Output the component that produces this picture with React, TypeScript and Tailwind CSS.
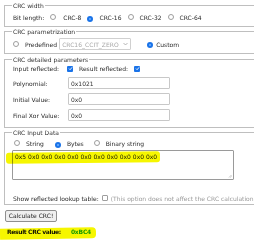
import React from "react";

const Radio = ({ checked = false }: { checked?: boolean }) =>
  checked ? (
    <span className="inline-flex items-center justify-center w-[6px] h-[6px] rounded-full bg-[#1a73e8] shrink-0">
      <span className="w-[2px] h-[2px] rounded-full bg-[#6fb0ff]" />
    </span>
  ) : (
    <span className="inline-block w-[6px] h-[6px] rounded-full border border-[#9e9e9e] bg-white shrink-0" />
  );

const Check = ({ checked = false }: { checked?: boolean }) =>
  checked ? (
    <span className="inline-flex items-center justify-center w-[6px] h-[6px] rounded-[1px] bg-[#1a73e8] shrink-0">
      <svg width="5" height="5" viewBox="0 0 10 10">
        <path d="M2 5.2 L4.2 7.4 L8.2 2.6" stroke="white" strokeWidth="1.8" fill="none" />
      </svg>
    </span>
  ) : (
    <span className="inline-block w-[6px] h-[6px] rounded-[1px] border border-[#9e9e9e] bg-white shrink-0" />
  );

const Field = ({ value }: { value: string }) => (
  <div className="w-[102px] h-[12px] border border-[#c8c8c8] rounded-[1px] flex items-center pl-[2px] text-[#333]">
    {value}
  </div>
);

export default function App() {
  const fs = "border border-[#bfbfbf] pl-[7px] w-[290px] m-0";
  const lg = "px-[1px] text-[#333]";
  return (
    <div className="relative w-[254px] h-[240px] overflow-hidden bg-white text-[6px] leading-[7px] text-[#2a2a2a] font-['DejaVu_Sans',sans-serif]">
      <div className="pl-[4px] pt-[1.5px]">
        <fieldset className={`${fs} pb-[2px]`}>
          <legend className={lg}>CRC width</legend>
          <div className="mt-[3px] h-[12px] flex items-center">
            <span className="pl-[1px]">Bit length:</span>
            <span className="ml-[6px]"><Radio /></span>
            <span className="ml-[7px]">CRC-8</span>
            <span className="ml-[6px]"><Radio checked /></span>
            <span className="ml-[6px]">CRC-16</span>
            <span className="ml-[6px]"><Radio /></span>
            <span className="ml-[6px]">CRC-32</span>
            <span className="ml-[6px]"><Radio /></span>
            <span className="ml-[6px]">CRC-64</span>
          </div>
        </fieldset>

        <fieldset className={`${fs} mt-[1.5px] pb-[3px]`}>
          <legend className={lg}>CRC parametrization</legend>
          <div className="mt-[3px] h-[12px] flex items-center">
            <span className="ml-[1px]"><Radio /></span>
            <span className="ml-[6px]">Predefined</span>
            <div className="ml-[2px] w-[72px] h-[12px] border border-[#d0d0d0] rounded-[1px] flex items-center justify-between pl-[2px] pr-[2px] text-[#a8a8a8]">
              <span>CRC16_CCIT_ZERO</span>
              <svg width="5" height="4" viewBox="0 0 10 8">
                <path d="M1 2 L5 6 L9 2" stroke="#9a9a9a" strokeWidth="1.4" fill="none" />
              </svg>
            </div>
            <span className="ml-[16px]"><Radio checked /></span>
            <span className="ml-[3px]">Custom</span>
          </div>
        </fieldset>

        <fieldset className={`${fs} mt-[1.5px] pb-[6px]`}>
          <legend className={lg}>CRC detailed parameters</legend>
          <div className="h-[12px] flex items-center">
            <span className="w-[55px] pl-[1px]">Input reflected:</span>
            <Check checked />
            <span className="ml-[6px] w-[55px]">Result reflected:</span>
            <Check checked />
          </div>
          <div className="mt-[2.5px] h-[12px] flex items-center">
            <span className="w-[56px] pl-[1px]">Polynomial:</span>
            <Field value="0x1021" />
          </div>
          <div className="mt-[4px] h-[12px] flex items-center">
            <span className="w-[56px] pl-[1px]">Initial Value:</span>
            <Field value="0x0" />
          </div>
          <div className="mt-[4px] h-[12px] flex items-center">
            <span className="w-[56px] pl-[1px]">Final Xor Value:</span>
            <Field value="0x0" />
          </div>
        </fieldset>

        <fieldset className={`${fs} mt-[0.5px] pb-0`}>
          <legend className={lg}>CRC Input Data</legend>
          <div className="mt-[3px] h-[10px] flex items-center">
            <span className="ml-[2px]"><Radio /></span>
            <span className="ml-[6px]">String</span>
            <span className="ml-[11px]"><Radio checked /></span>
            <span className="ml-[6px]">Bytes</span>
            <span className="ml-[10px]"><Radio /></span>
            <span className="ml-[6px]">Binary string</span>
          </div>
          <div className="relative mt-[1px] w-[222px] h-[30px] border border-[#9a9a9a] rounded-[1px] pl-[2px] pt-[2px] text-[#222]">
            0x5 0x0 0x0 0x0 0x0 0x0 0x0 0x0 0x0 0x0 0x0
            <svg className="absolute right-[1px] bottom-[1px]" width="4" height="4" viewBox="0 0 8 8">
              <path d="M7 2 L2 7 M7 5 L5 7" stroke="#888" strokeWidth="1" />
            </svg>
          </div>
          <div className="mt-[14px] h-[10px] flex items-center">
            <span className="pl-[1px]">Show reflected lookup table:</span>
            <span className="ml-[3px]"><Check /></span>
            <span className="ml-[3px] text-[#9a9a9a] whitespace-nowrap">(This option does not affect the CRC calculation</span>
          </div>
        </fieldset>

        <div className="mt-[5px] ml-[1px] w-[52px] h-[12px] border border-[#8f8f8f] rounded-[2px] bg-[#efefef] flex items-center justify-center text-[#222]">
          Calculate CRC!
        </div>

        <div className="mt-[5px] h-[10px] flex items-center pl-[3px]">
          <span className="font-bold text-[#111] tracking-[-0.35px]">Result CRC value:</span>
          <span className="ml-[10px] font-bold text-[#1aa01a] tracking-[-0.2px]">0xBC4</span>
        </div>
      </div>

      <div className="absolute left-[6px] top-[152px] w-[154px] h-[11px] bg-[#f6f600] mix-blend-multiply rounded-[3px] -rotate-[0.6deg]" />
      <div className="absolute left-0 top-[228px] w-[96px] h-[11px] bg-[#f6f600] mix-blend-multiply rounded-r-[4px] -rotate-[1deg]" />
    </div>
  );
}
